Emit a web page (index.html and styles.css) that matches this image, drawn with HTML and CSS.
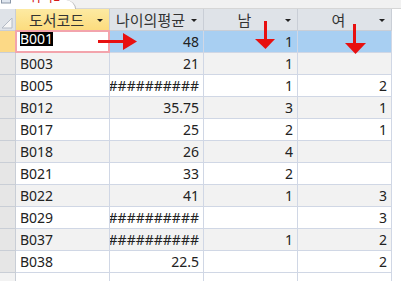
FILE: index.html
```html
<!DOCTYPE html>
<html lang="ko">
<head>
<meta charset="utf-8">
<title>쿼리1</title>
<link rel="stylesheet" href="styles.css">
</head>
<body>
<div class="tabs">
  <div class="tab">
    <svg class="tab-icon" width="10" height="4" viewBox="0 0 10 4"><rect x="0.5" y="-3" width="9" height="6" fill="#dfe6ef" stroke="#8a97a8"/></svg>
    <span class="tab-title">쿼리1</span>
  </div>
  <div class="tab-rest"></div>
</div>
<div class="sheet">
  <div class="hrow">
    <div class="corner"><svg width="15" height="21" viewBox="0 0 15 21"><polygon points="12,9 12,19 2,19" fill="#f6f6f6" stroke="#b3bac5" stroke-width="1"/></svg></div>
    <div class="hcell active"><span class="label">도서코드</span><span class="dd"></span></div>
    <div class="hcell"><span class="label">나이의평균</span><span class="dd"></span></div>
    <div class="hcell"><span class="label">남</span><span class="dd"></span></div>
    <div class="hcell"><span class="label">여</span><span class="dd"></span></div>
  </div>
  <div class="row current">
    <div class="sel"></div>
    <div class="cell focus"><span class="hl">B001</span></div>
    <div class="cell num">48</div>
    <div class="cell num">1</div>
    <div class="cell num"></div>
  </div>
  <div class="row alt"><div class="sel"></div><div class="cell">B003</div><div class="cell num">21</div><div class="cell num">1</div><div class="cell num"></div></div>
  <div class="row"><div class="sel"></div><div class="cell">B005</div><div class="cell num">##########</div><div class="cell num">1</div><div class="cell num">2</div></div>
  <div class="row alt"><div class="sel"></div><div class="cell">B012</div><div class="cell num">35.75</div><div class="cell num">3</div><div class="cell num">1</div></div>
  <div class="row"><div class="sel"></div><div class="cell">B017</div><div class="cell num">25</div><div class="cell num">2</div><div class="cell num">1</div></div>
  <div class="row alt"><div class="sel"></div><div class="cell">B018</div><div class="cell num">26</div><div class="cell num">4</div><div class="cell num"></div></div>
  <div class="row"><div class="sel"></div><div class="cell">B021</div><div class="cell num">33</div><div class="cell num">2</div><div class="cell num"></div></div>
  <div class="row alt"><div class="sel"></div><div class="cell">B022</div><div class="cell num">41</div><div class="cell num">1</div><div class="cell num">3</div></div>
  <div class="row"><div class="sel"></div><div class="cell">B029</div><div class="cell num">##########</div><div class="cell num"></div><div class="cell num">3</div></div>
  <div class="row alt"><div class="sel"></div><div class="cell">B037</div><div class="cell num">##########</div><div class="cell num">1</div><div class="cell num">2</div></div>
  <div class="row"><div class="sel"></div><div class="cell">B038</div><div class="cell num">22.5</div><div class="cell num"></div><div class="cell num">2</div></div>
  <div class="row new"><div class="sel"></div><div class="cell"></div><div class="cell"></div><div class="cell"></div><div class="cell"></div></div>
</div>
<svg class="arrows" width="401" height="281" viewBox="0 0 401 281">
  <g fill="#e81010">
    <rect x="98" y="40" width="26" height="3"/>
    <polygon points="123,33 137,41.5 123,50"/>
    <rect x="264" y="21" width="3" height="19"/>
    <polygon points="255,39 275,39 265.5,49"/>
    <rect x="353" y="24" width="3" height="20"/>
    <polygon points="345,43 366,43 355.5,54"/>
  </g>
</svg>
</body>
</html>
```
FILE: styles.css
```css
html, body {
  margin: 0;
  padding: 0;
  background: #ffffff;
}
body {
  width: 401px;
  height: 281px;
  overflow: hidden;
  position: relative;
  font-family: "Noto Sans", "Noto Sans CJK KR", sans-serif;
  color: #222222;
}
.tabs {
  display: flex;
  height: 9px;
  background: #f1f1f1;
}
.tab {
  width: 76px;
  height: 9px;
  box-sizing: border-box;
  background: #ffffff;
  border-right: 1px solid #b5b5b5;
  border-top-right-radius: 10px 9px;
  display: flex;
  align-items: flex-start;
  overflow: hidden;
}
.tab-icon {
  display: block;
  margin-left: 1px;
  flex: none;
}
.tab-title {
  margin-left: 18px;
  margin-top: -11px;
  font-family: "Noto Sans CJK KR", sans-serif;
  font-size: 13px;
  line-height: 14px;
  color: #d41a1a;
}
.tab-rest {
  flex: 1;
  border-bottom: 1px solid #d6d6d6;
}
.sheet {
  display: flex;
  flex-direction: column;
}
.hrow, .row {
  display: flex;
  height: 22px;
  flex: none;
}
.corner, .sel {
  width: 16px;
  flex: none;
  box-sizing: border-box;
  border-right: 1px solid #c9ced6;
  border-bottom: 1px solid #c9ced6;
}
.corner {
  background: #dfe3e8;
}
.corner svg {
  display: block;
}
.sel {
  background: #e6e6e6;
}
.hcell {
  width: 94px;
  flex: none;
  box-sizing: border-box;
  display: flex;
  align-items: center;
  background: #dfe3e8;
  border-right: 1px solid #c9ced6;
  border-bottom: 1px solid #c9ced6;
  font-family: "Noto Sans CJK KR", sans-serif;
  font-size: 15px;
  color: #333333;
}
.hcell.active {
  background: linear-gradient(#fdeaa2, #fcdc7e);
}
.hcell .label {
  flex: 1;
  text-align: center;
  white-space: nowrap;
  overflow: hidden;
}
.hcell .dd {
  flex: none;
  width: 0;
  height: 0;
  border-left: 3px solid transparent;
  border-right: 3px solid transparent;
  border-top: 3px solid #222222;
  margin-right: 6px;
  margin-top: 2px;
}
.cell {
  width: 94px;
  flex: none;
  box-sizing: border-box;
  border-right: 1px solid #d0d7e5;
  border-bottom: 1px solid #d0d7e5;
  padding: 0 4px;
  font-size: 14px;
  line-height: 21px;
  white-space: nowrap;
  overflow: hidden;
  background: #ffffff;
}
.num {
  text-align: right;
  direction: rtl;
}
.row.alt .cell {
  background: #f2f2f2;
}
.row.current .cell {
  background: #a8cff2;
}
.row.current .sel {
  background: #fcd986;
}
.row.current .cell.focus {
  background: #ffffff;
  position: relative;
  overflow: visible;
}
.cell.focus::after {
  content: "";
  position: absolute;
  left: -1px;
  top: -1px;
  right: -1px;
  bottom: -1px;
  border: 2px solid #f3a4ac;
}
.hl {
  display: inline-block;
  vertical-align: top;
  margin-top: 1px;
  line-height: 14px;
  background: #000000;
  color: #ffffff;
}
.row.new .sel {
  background: #f2f2f2;
}
.arrows {
  position: absolute;
  left: 0;
  top: 0;
  pointer-events: none;
}
```
